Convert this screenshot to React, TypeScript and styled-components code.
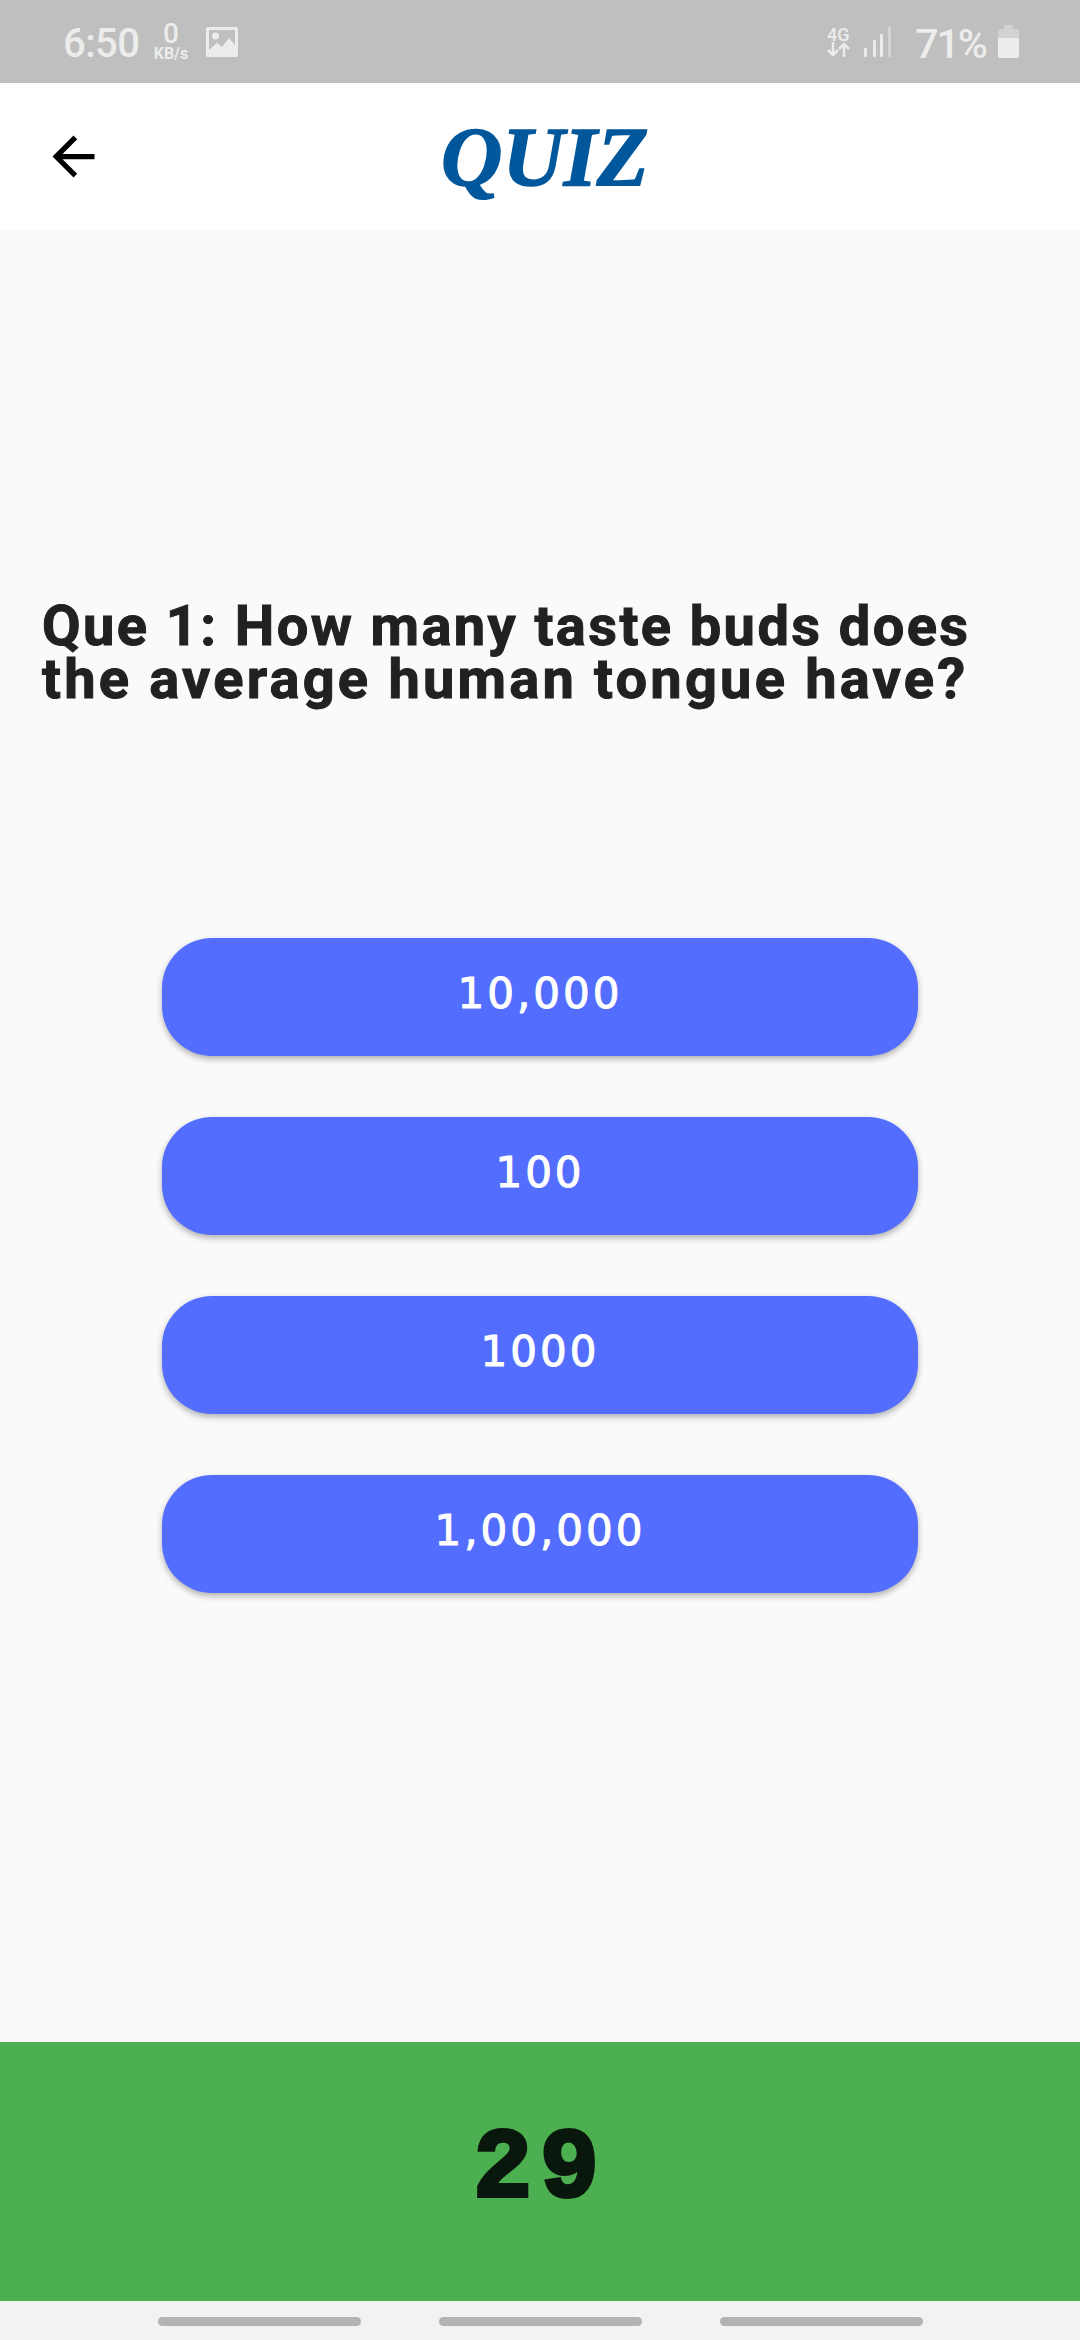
import { createGlobalStyle } from 'styled-components';
import styled from 'styled-components';

const GlobalStyle = createGlobalStyle`
  html, body {
    margin: 0;
    padding: 0;
    background: #fafafa;
  }
  * {
    box-sizing: border-box;
  }
`;

const Screen = styled.div`
  width: 1080px;
  height: 2340px;
  display: flex;
  flex-direction: column;
  background: #fafafa;
  overflow: hidden;
`;

/* ~~~ status bar ~~~ */
const StatusBar = styled.div`
  height: 83px;
  flex: none;
  display: flex;
  align-items: center;
  justify-content: space-between;
  padding: 0 61px 0 63px;
  background: #bfbfbf;
  color: #ececec;
  font-family: Roboto, sans-serif;
`;

const StatusGroup = styled.div`
  display: flex;
  align-items: center;
`;

const Clock = styled.span`
  font-size: 40px;
  font-weight: 500;
  line-height: 40px;
  letter-spacing: -0.6px;
  width: 89px;
  margin-top: 4px;
`;

const Speed = styled.div`
  width: 38px;
  margin-right: 16px;
  display: flex;
  flex-direction: column;
  align-items: center;
  font-weight: 700;
`;

const SpeedValue = styled.span`
  font-size: 28px;
  line-height: 24px;
  font-weight: 500;
`;

const SpeedUnit = styled.span`
  font-size: 16px;
  line-height: 15px;
`;

const Network = styled.div`
  display: flex;
  flex-direction: column;
  align-items: center;
  margin-right: 14px;
`;

const NetworkLabel = styled.span`
  font-size: 18px;
  line-height: 15px;
  font-weight: 500;
`;

const Percent = styled.span`
  font-size: 41px;
  line-height: 40px;
  font-weight: 500;
  letter-spacing: -2px;
  margin: 4px 12px 0 24px;
`;

/* ~~~ app bar ~~~ */
const Header = styled.header`
  height: 147px;
  flex: none;
  display: flex;
  align-items: center;
  padding-left: 42px;
  background: #ffffff;
`;

const BackIcon = styled.svg`
  width: 63px;
  height: 63px;
  flex: none;
  fill: #000000;
`;

const Title = styled.h1`
  margin: 2px 0 0 336px;
  font-family: "Liberation Serif", serif;
  font-size: 85px;
  font-style: italic;
  font-weight: 700;
  line-height: 85px;
  color: #01579b;
  -webkit-text-stroke: 1.500px #01579b;
`;

/* ~~~ question and answers ~~~ */
const Main = styled.main`
  flex: 1;
  display: flex;
  flex-direction: column;
  padding-top: 370px;
`;

const Question = styled.h2`
  margin: 0;
  padding-left: 42px;
  font-family: Roboto, sans-serif;
  font-size: 56px;
  font-weight: 700;
  line-height: 53px;
  color: #212121;
  -webkit-text-stroke: 1px #212121;
`;

const QuestionLine = styled.span<{ $spacing: number }>`
  display: block;
  letter-spacing: ${(p) => p.$spacing}px;
`;

const Options = styled.div`
  width: 756px;
  margin: 232px auto 0;
  display: flex;
  flex-direction: column;
  gap: 61px;
`;

const Option = styled.button`
  height: 118px;
  flex: none;
  border: 0;
  padding: 0 0 7px;
  border-radius: 50px;
  background: #536dfe;
  box-shadow: 0 3px 6px rgba(0, 0, 0, 0.3);
  color: #ffffff;
  font-family: "DejaVu Sans", sans-serif;
  font-size: 42px;
  line-height: 48px;
  letter-spacing: 3px;
  -webkit-text-stroke: 1px #ffffff;
`;

/* ~~~ timer ~~~ */
const Timer = styled.div`
  height: 259px;
  flex: none;
  display: flex;
  align-items: center;
  justify-content: center;
  padding-bottom: 4px;
  background: #4caf50;
  color: #0a170c;
  font-family: "Liberation Mono", monospace;
  font-size: 98px;
  font-weight: 700;
  letter-spacing: 8px;
  -webkit-text-stroke: 4px #0a170c;
`;

/* ~~~ navigation bar ~~~ */
const NavBar = styled.nav`
  height: 39px;
  flex: none;
  display: flex;
  justify-content: center;
  gap: 78px;
  padding-top: 16px;
  background: #f2f2f2;
`;

const NavPill = styled.div`
  width: 203px;
  height: 9px;
  border-radius: 5px;
  background: #b3b3b3;
`;

const options = ['10,000', '100', '1000', '1,00,000'];

function App() {
  return (
    <Screen>
      <GlobalStyle />
      <StatusBar>
        <StatusGroup>
          <Clock>6:50</Clock>
          <Speed>
            <SpeedValue>0</SpeedValue>
            <SpeedUnit>KB/s</SpeedUnit>
          </Speed>
          <svg width="32" height="30" viewBox="0 0 32 30">
            <path
              fill="#ececec"
              fillRule="evenodd"
              d="M2 0h28a2 2 0 0 1 2 2v26a2 2 0 0 1-2 2H2a2 2 0 0 1-2-2V2a2 2 0 0 1 2-2zM3 3v20l8-7 5 4 7-9 6 7V3zM9.500 5.500a3.500 3.500 0 1 1 0 7 3.500 3.500 0 0 1 0-7z"
            />
          </svg>
        </StatusGroup>
        <StatusGroup>
          <Network>
            <NetworkLabel>4G</NetworkLabel>
            <svg width="24" height="15" viewBox="0 0 24 15">
              <path
                fill="none"
                stroke="#ececec"
                strokeWidth="2.500"
                d="M7 0v13M2 8l5 5 5-5M18 15V2M13 7l5-5 5 5"
              />
            </svg>
          </Network>
          <svg width="27" height="30" viewBox="0 0 27 30">
            <rect x="0" y="21" width="3" height="9" rx="1" fill="#ececec" />
            <rect x="9" y="13" width="3" height="17" rx="1" fill="#ececec" />
            <rect x="16" y="7" width="3" height="23" rx="1" fill="#ececec" />
            <rect x="24" y="0" width="3" height="30" rx="1" fill="#d4d4d4" />
          </svg>
          <Percent>71%</Percent>
          <svg width="21" height="33" viewBox="0 0 21 33">
            <path fill="#d2d2d2" d="M6 0h9v4h4a2 2 0 0 1 2 2v7H0V6a2 2 0 0 1 2-2h4z" />
            <path fill="#ececec" d="M0 13h21v18a2 2 0 0 1-2 2H2a2 2 0 0 1-2-2z" />
          </svg>
        </StatusGroup>
      </StatusBar>
      <Header>
        <BackIcon viewBox="0 0 24 24">
          <path d="M20 11H7.830l5.590-5.590L12 4l-8 8 8 8 1.410-1.410L7.830 13H20v-2z" />
        </BackIcon>
        <Title>QUIZ</Title>
      </Header>
      <Main>
        <Question>
          <QuestionLine $spacing={2.4}>Que 1: How many taste buds does</QuestionLine>
          <QuestionLine $spacing={3.2}>the average human tongue have?</QuestionLine>
        </Question>
        <Options>
          {options.map((option) => (
            <Option key={option}>{option}</Option>
          ))}
        </Options>
      </Main>
      <Timer>29</Timer>
      <NavBar>
        <NavPill />
        <NavPill />
        <NavPill />
      </NavBar>
    </Screen>
  );
}

export default App;
